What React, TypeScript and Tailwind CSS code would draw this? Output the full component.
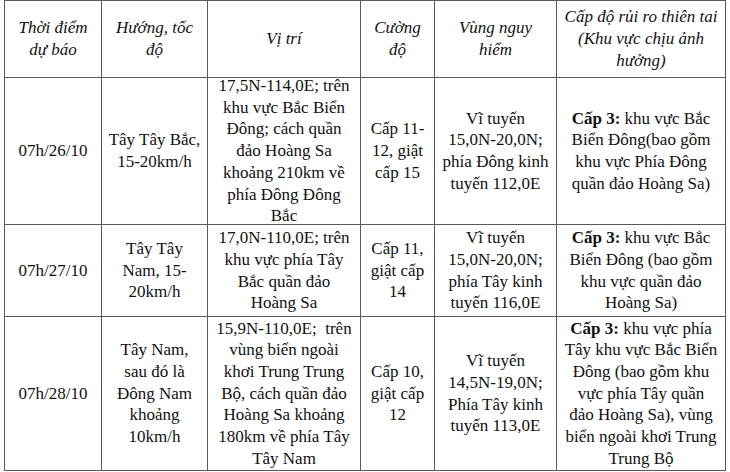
import type { ReactNode } from "react";

type Row = {
  time: string;
  direction: string[];
  position: string[];
  strength: string[];
  danger: string[];
  risk: string[];
};

const rows: Row[] = [
  {
    time: "07h/26/10",
    direction: ["Tây Tây Bắc,", "15-20km/h"],
    position: [
      "17,5N-114,0E; trên",
      "khu vực Bắc Biển",
      "Đông; cách quần",
      "đảo Hoàng Sa",
      "khoảng 210km về",
      "phía Đông Đông",
      "Bắc",
    ],
    strength: ["Cấp 11-", "12, giật", "cấp 15"],
    danger: ["Vĩ tuyến", "15,0N-20,0N;", "phía Đông kinh", "tuyến 112,0E"],
    risk: [" khu vực Bắc", "Biển Đông(bao gồm", "khu vực Phía Đông", "quần đảo Hoàng Sa)"],
  },
  {
    time: "07h/27/10",
    direction: ["Tây Tây", "Nam, 15-", "20km/h"],
    position: ["17,0N-110,0E; trên", "khu vực phía Tây", "Bắc quần đảo", "Hoàng Sa"],
    strength: ["Cấp 11,", "giật cấp", "14"],
    danger: ["Vĩ tuyến", "15,0N-20,0N;", "phía Tây kinh", "tuyến 116,0E"],
    risk: [" khu vực Bắc", "Biển Đông (bao gồm", "khu vực quần đảo", "Hoàng Sa)"],
  },
  {
    time: "07h/28/10",
    direction: ["Tây Nam,", "sau đó là", "Đông Nam", "khoảng", "10km/h"],
    position: [
      "15,9N-110,0E;  trên",
      "vùng biển ngoài",
      "khơi Trung Trung",
      "Bộ, cách quần đảo",
      "Hoàng Sa khoảng",
      "180km về phía Tây",
      "Tây Nam",
    ],
    strength: ["Cấp 10,", "giật cấp", "12"],
    danger: ["Vĩ tuyến", "14,5N-19,0N;", "Phía Tây kinh", "tuyến 113,0E"],
    risk: [
      " khu vực phía",
      "Tây khu vực Bắc Biển",
      "Đông (bao gồm khu",
      "vực phía Tây quần",
      "đảo Hoàng Sa), vùng",
      "biển ngoài khơi Trung",
      "Trung Bộ",
    ],
  },
];

function Cell({ children, italic }: { children: ReactNode; italic?: boolean }) {
  return (
    <div
      className={`flex flex-col items-center justify-center bg-white text-center ${
        italic ? "italic" : ""
      }`}
    >
      {children}
    </div>
  );
}

function Lines({ lines }: { lines: string[] }) {
  return (
    <>
      {lines.map((l, i) => (
        <span key={i} className="block whitespace-pre">
          {l}
        </span>
      ))}
    </>
  );
}

export default function App() {
  return (
    <div className="h-[472px] w-[730px] bg-white pl-[4px] font-serif text-[17px] leading-[21.7px] text-[#111]">
      <div className="grid w-[722px] grid-cols-[96px_105px_152px_73px_121px_168px] grid-rows-[76px_146px_91px_153px] gap-px bg-[#5a5a5a] p-px [font-family:Liberation_Serif,serif]">
        <Cell italic>
          <Lines lines={["Thời điểm", "dự báo"]} />
        </Cell>
        <Cell italic>
          <Lines lines={["Hướng, tốc", "độ"]} />
        </Cell>
        <Cell italic>
          <Lines lines={["Vị trí"]} />
        </Cell>
        <Cell italic>
          <Lines lines={["Cường", "độ"]} />
        </Cell>
        <Cell italic>
          <Lines lines={["Vùng nguy", "hiểm"]} />
        </Cell>
        <Cell italic>
          <Lines lines={["Cấp độ rủi ro thiên tai", "(Khu vực chịu ảnh", "hưởng)"]} />
        </Cell>

        {rows.map((r) => (
          <RowCells key={r.time} row={r} />
        ))}
      </div>
    </div>
  );
}

function RowCells({ row }: { row: Row }) {
  const [first, ...rest] = row.risk;
  return (
    <>
      <Cell>
        <Lines lines={[row.time]} />
      </Cell>
      <Cell>
        <Lines lines={row.direction} />
      </Cell>
      <Cell>
        <Lines lines={row.position} />
      </Cell>
      <Cell>
        <Lines lines={row.strength} />
      </Cell>
      <Cell>
        <Lines lines={row.danger} />
      </Cell>
      <Cell>
        <span className="block whitespace-pre">
          <b>Cấp 3:</b>
          {first}
        </span>
        <Lines lines={rest} />
      </Cell>
    </>
  );
}
